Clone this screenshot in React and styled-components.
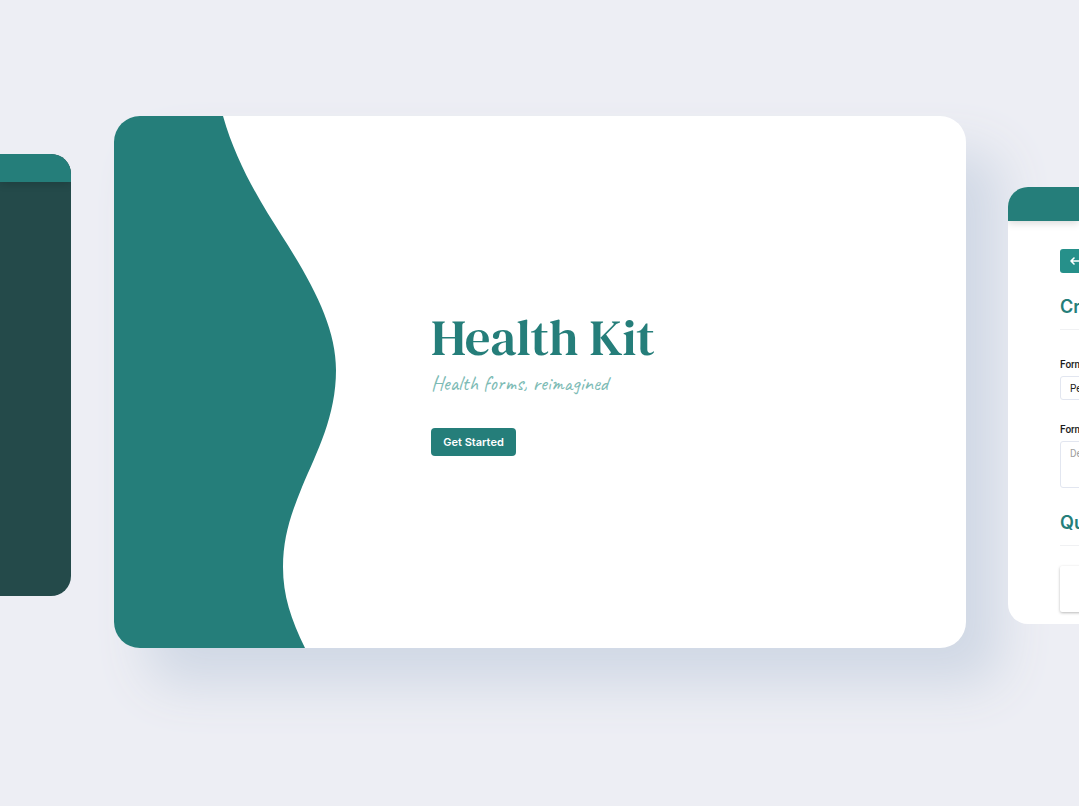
import React from "react";
import styled, { createGlobalStyle } from "styled-components";

const teal = "#257e7a";

const GlobalStyle = createGlobalStyle`
  * { box-sizing: border-box; }
  body { margin: 0; background: #edeef4; font-family: Inter, "Liberation Sans", sans-serif; }
  h1, h2, p { margin: 0; }
`;

const Showcase = styled.main`
  display: grid;
  grid-template-columns: 71px minmax(0, 1fr) 71px;
  column-gap: 43px;
  align-items: start;
  min-height: 100vh;
  overflow: hidden;
`;

const Slide = styled.section`
  margin-top: ${(p) => p.$top}px;
  min-height: ${(p) => p.$height}px;
  overflow: hidden;
`;

const DarkSlide = styled(Slide)`
  background: #244a4a;
  border-radius: 0 20px 20px 0;
`;

const HeroSlide = styled(Slide)`
  display: flex;
  margin-right: -1px;
  background: #fff;
  border-radius: 26px;
  box-shadow: 34px 36px 52px #d0d8e5;
`;

const FormSlide = styled(Slide)`
  background: #fff;
  border-radius: 20px 0 0 20px;
`;

const SlideHeader = styled.header`
  height: ${(p) => p.$height}px;
  background: ${teal};
  box-shadow: 0 2px 8px rgba(0, 0, 0, 0.16);
`;

const Wave = styled.svg`
  flex: none;
  width: 222px;
  height: 532px;
  fill: ${teal};
`;

const Intro = styled.div`
  display: flex;
  flex-direction: column;
  align-items: flex-start;
  padding: 193px 0 0 95px;
`;

const Title = styled.h1`
  font: 400 51px/56px "DM Serif Text", "DM Serif Display", "Liberation Serif", serif;
  color: ${teal};
  white-space: nowrap;
`;

const Tagline = styled.p`
  margin-top: 6px;
  font: 400 21px/24px Caveat, Lato, sans-serif;
  color: #7dbbb5;
  white-space: nowrap;
`;

const StartButton = styled.button`
  width: 85px;
  height: 28px;
  margin-top: 33px;
  padding: 0;
  border: 0;
  border-radius: 4px;
  background: ${teal};
  color: #fff;
  font: 600 11px/16px Inter, sans-serif;
`;

const FormBody = styled.form`
  display: flex;
  flex-direction: column;
  padding: 28px 0 12px 52px;
  white-space: nowrap;
`;

const BackButton = styled.button`
  display: flex;
  align-items: center;
  width: 48px;
  height: 24px;
  padding: 0 0 0 9px;
  border: 0;
  border-radius: 3px;
  background: #26908a;
  color: #fff;
`;

const Heading = styled.h2`
  margin-top: ${(p) => p.$top}px;
  padding-bottom: 12px;
  border-bottom: 1px solid #f0f1f3;
  color: ${teal};
  font: 600 18px/20px Inter, sans-serif;
`;

const Label = styled.label`
  margin-top: ${(p) => p.$top}px;
  color: #1c1c1c;
  font: 500 10px/12px Roboto, sans-serif;
`;

const Input = styled.input`
  width: 200px;
  height: 24px;
  margin-top: 5px;
  padding: 0 9px;
  border: 1px solid #e2e6f0;
  border-radius: 3px;
  color: #222;
  font: 400 10px/12px Roboto, sans-serif;
`;

const TextArea = styled.textarea`
  width: 200px;
  height: 47px;
  margin-top: 5px;
  padding: 6px 9px;
  border: 1px solid #e2e6f0;
  border-radius: 3px;
  resize: none;
  font: 400 10px/12px Roboto, sans-serif;
  &::placeholder { color: #a0a0a0; }
`;

const QuestionCard = styled.div`
  height: 46px;
  margin: 20px -20px 0 0;
  border-radius: 2px;
  background: #fff;
  box-shadow: 0 1px 3px rgba(0, 0, 0, 0.28);
`;

export default function App() {
  return (
    <>
      <GlobalStyle />
      <Showcase>
        <DarkSlide $top={154} $height={442}>
          <SlideHeader $height={28} />
        </DarkSlide>

        <HeroSlide $top={116} $height={532}>
          <Wave viewBox="0 0 222 532" aria-hidden="true">
            <path d="M0 0H109C122 46 145 84 168 120C200 170 222 212 222 254C222 300 203 336 188 371C177 398 169 421 169 451C169 480 177 503 191 532H0Z" />
          </Wave>
          <Intro>
            <Title>Health Kit</Title>
            <Tagline>Health forms, reimagined</Tagline>
            <StartButton type="button">Get Started</StartButton>
          </Intro>
        </HeroSlide>

        <FormSlide $top={187} $height={437}>
          <SlideHeader $height={34} />
          <FormBody>
            <BackButton type="button" aria-label="Back">
              <svg width="10" height="10" viewBox="0 0 10 10" fill="none" stroke="currentColor" strokeWidth="1.6" strokeLinecap="round" strokeLinejoin="round">
                <path d="M9.5 5H2M5 2L2 5L5 8" />
              </svg>
            </BackButton>
            <Heading $top={24}>Cr</Heading>
            <Label $top={29} htmlFor="form-name">Form</Label>
            <Input id="form-name" defaultValue="Pe" />
            <Label $top={24} htmlFor="form-description">Form</Label>
            <TextArea id="form-description" placeholder="De" />
            <Heading $top={25}>Qu</Heading>
            <QuestionCard />
          </FormBody>
        </FormSlide>
      </Showcase>
    </>
  );
}
